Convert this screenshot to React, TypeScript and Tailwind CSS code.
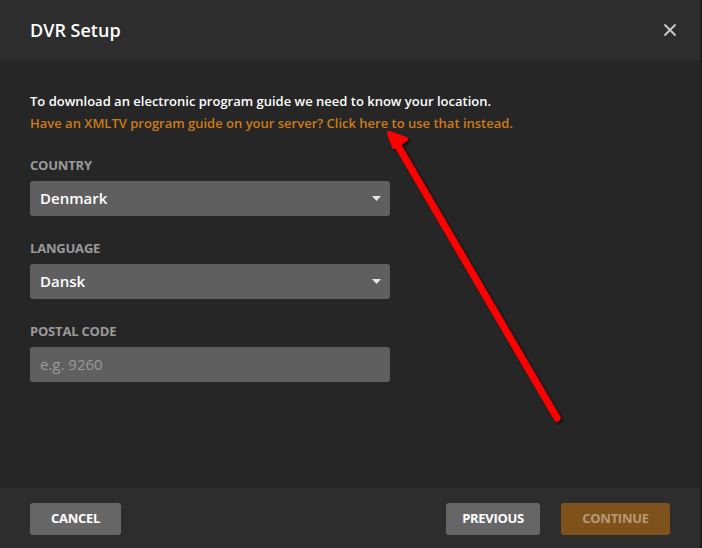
import * as React from "react";

function Caret() {
  return (
    <svg width="9" height="5" viewBox="0 0 9 5" className="shrink-0">
      <path d="M0 0 L9 0 L4.5 5 Z" fill="#e6e6e6" />
    </svg>
  );
}

function SelectBox({ value }: { value: string }) {
  return (
    <div className="flex h-[35px] w-[360px] items-center justify-between rounded-[3px] bg-[#5f5f5f] pl-[10px] pr-[9px]">
      <span className="text-[15px] font-semibold text-white">{value}</span>
      <Caret />
    </div>
  );
}

function FieldLabel({ children }: { children: React.ReactNode }) {
  return (
    <div className="mb-[7px] text-[13px] font-bold uppercase leading-[18px] tracking-[-0.2px] text-[#9a9a9a]">
      {children}
    </div>
  );
}

export default function App() {
  return (
    <div
      className="relative flex h-[548px] w-[702px] flex-col overflow-hidden bg-[#262626]"
      style={{ fontFamily: '"Open Sans", "Noto Sans", sans-serif' }}
    >
      {/* header */}
      <header className="flex h-[60px] shrink-0 items-center justify-between bg-[#2d2d2d] pl-[30px] pr-[25px]">
        <h1 className="text-[18px] font-semibold text-white">DVR Setup</h1>
        <svg width="14" height="14" viewBox="0 0 14 14">
          <path d="M1.5 1.5 L12.5 12.5 M12.5 1.5 L1.5 12.5" stroke="#c8c8c8" strokeWidth="2" />
        </svg>
      </header>

      {/* body */}
      <main className="flex flex-1 flex-col px-[30px] pt-[30px]">
        <p className="text-[13px] font-semibold leading-[22px] text-white">
          To download an electronic program guide we need to know your location.
        </p>
        <p className="text-[13px] font-semibold leading-[22px] text-[#cc7b19]">
          Have an XMLTV program guide on your server? Click here to use that instead.
        </p>

        <div className="mt-[22px]">
          <FieldLabel>Country</FieldLabel>
          <SelectBox value="Denmark" />
        </div>
        <div className="mt-[23px]">
          <FieldLabel>Language</FieldLabel>
          <SelectBox value="Dansk" />
        </div>
        <div className="mt-[23px]">
          <FieldLabel>Postal Code</FieldLabel>
          <div className="flex h-[35px] w-[360px] items-center rounded-[3px] bg-[#5f5f5f] px-[10px] text-[15px] text-[#9a9a9a]">
            e.g. 9260
          </div>
        </div>
      </main>

      {/* footer */}
      <footer className="flex h-[60px] shrink-0 items-center justify-between bg-[#2d2d2d] pt-[2px] pl-[30px] pr-[32px]">
        <button className="h-[32px] w-[91px] rounded-[3px] bg-[#666666] text-[13px] font-bold tracking-[-0.3px] text-white">
          CANCEL
        </button>
        <div className="flex gap-[21px]">
          <button className="h-[32px] w-[94px] rounded-[3px] bg-[#666666] text-[13px] font-bold tracking-[-0.3px] text-white">
            PREVIOUS
          </button>
          <button className="h-[32px] w-[109px] rounded-[3px] bg-[#7f521b] text-[13px] font-bold tracking-[-0.3px] text-[#b69a78]">
            CONTINUE
          </button>
        </div>
      </footer>

      <div className="absolute right-0 top-0 h-full w-[2px] bg-[#1f1f1f]" />

      {/* annotation arrow */}
      <svg className="pointer-events-none absolute left-0 top-0" width="702" height="548">
        <defs>
          <filter id="sh" x="-20%" y="-20%" width="140%" height="140%">
            <feDropShadow dx="2" dy="2" stdDeviation="1.5" floodColor="#000" floodOpacity="0.7" />
          </filter>
        </defs>
        <g filter="url(#sh)">
          <line x1="557" y1="418" x2="398" y2="146" stroke="#ff0000" strokeWidth="7" strokeLinecap="round" />
          <path d="M389 133 L406 139 L394 147 Z" fill="#ff0000" stroke="#ff0000" strokeWidth="4" strokeLinejoin="round" />
        </g>
      </svg>
    </div>
  );
}
